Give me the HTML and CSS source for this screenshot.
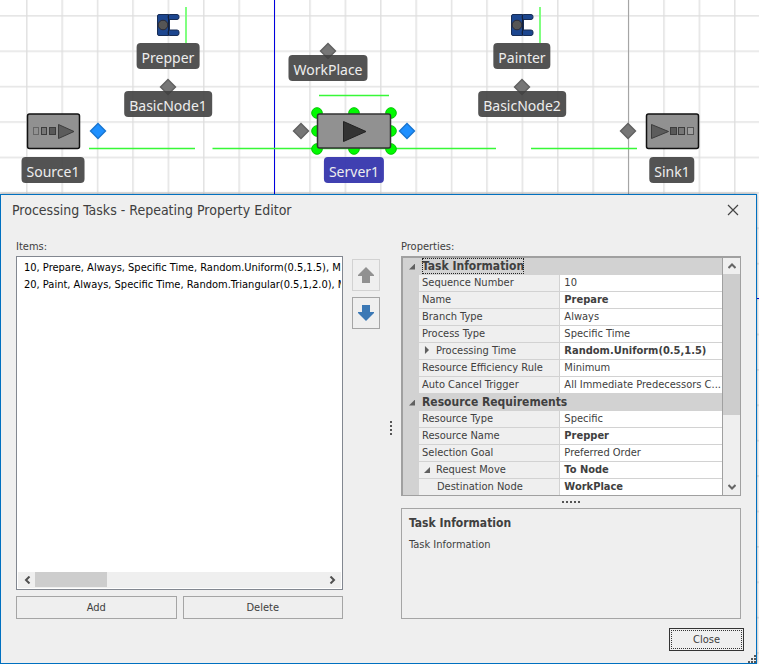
FILE: index.html
```html
<!DOCTYPE html>
<html lang="en">
<head>
<meta charset="utf-8">
<title>Processing Tasks - Repeating Property Editor</title>
<link rel="stylesheet" href="styles.css">
</head>
<body>
<main class="facility">
  <svg class="scene" width="759" height="664" aria-hidden="true">
    <defs>
      <pattern id="grid" x="26" y="15" width="35.4" height="35.4" patternUnits="userSpaceOnUse">
        <path d="M.8 0V35.4M0 .8H35.4" stroke="#dedede" stroke-width="1.3" fill="none"/>
      </pattern>
      <g id="diamond"><path d="M0-7.5 7.5 0 0 7.5-7.5 0z" stroke-width="1.4"/></g>
      <g id="worker">
        <rect x="-10.500" y="-10.500" width="12" height="21" rx="1.500" fill="#1c468f" stroke="#182d55"/>
        <rect x="0" y="-10.500" width="11" height="5" rx="2" fill="#1c468f" stroke="#182d55"/>
        <rect x="0" y="5" width="11" height="5.500" rx="2" fill="#1c468f" stroke="#182d55"/>
        <path d="M.5-10V10" stroke="#12203c"/>
        <circle cx="-5" cy="0" r="4.800" fill="#555" stroke="#2c2c36"/>
      </g>
    </defs>
    <rect width="759" height="664" fill="url(#grid)"/>
    <path d="M628.500 0V664" stroke="#a5a5a5"/>
    <path d="M274.500 0V664M757 298.500H759" stroke="#0000e0"/>
    <path d="M186 7V43M540 7V43" stroke="#80ff80" stroke-width="2"/>
    <path d="M89 148.500H195M212.500 148.500H496M531 148.500H637M319 95.500H389" stroke="#37f837" stroke-width="1.300"/>
    <use href="#worker" x="168" y="25"/>
    <use href="#worker" x="522" y="25"/>
    <g fill="#767676" stroke="#606060">
      <use href="#diamond" x="168" y="87"/><use href="#diamond" x="522" y="87"/>
      <use href="#diamond" x="328" y="51"/><use href="#diamond" x="301" y="131"/>
      <use href="#diamond" x="628" y="131"/>
    </g>
    <g fill="#1e90ff" stroke="#1875d0">
      <use href="#diamond" x="98" y="131"/><use href="#diamond" x="407" y="131"/>
    </g>
    <g fill="#00fa00" stroke="#00c800">
      <circle cx="317" cy="113" r="5.300"/><circle cx="354" cy="113" r="5.300"/><circle cx="391" cy="113" r="5.300"/>
      <circle cx="317" cy="131" r="5.300"/><circle cx="391" cy="131" r="5.300"/>
      <circle cx="317" cy="149" r="5.300"/><circle cx="354" cy="149" r="5.300"/><circle cx="391" cy="149" r="5.300"/>
    </g>
    <rect x="317.500" y="114" width="73" height="34" rx="2" fill="#919191" stroke="#333" stroke-width="1.500"/>
    <path d="M343.500 121.500V141.500L366 131.500z" fill="#333" stroke="#222"/>
    <rect x="27.500" y="114" width="52" height="34.500" rx="2" fill="#919191" stroke="#111" stroke-width="1.500"/>
    <g stroke="#3c3c3c">
      <rect x="33.500" y="127.500" width="5" height="7" fill="#919191" stroke="#666"/>
      <rect x="41.500" y="127.500" width="5" height="7" fill="#777"/>
      <rect x="49.500" y="127.500" width="6" height="7" fill="#595959"/>
      <path d="M58.500 124.500V138.500L74 131.500z" fill="#5c5c5c"/>
    </g>
    <rect x="646.500" y="114" width="52" height="34.500" rx="2" fill="#919191" stroke="#111" stroke-width="1.500"/>
    <g stroke="#3c3c3c">
      <path d="M651.500 124.500V138.500L668.500 131.500z" fill="#5c5c5c"/>
      <rect x="670.500" y="127.500" width="6" height="7" fill="#595959"/>
      <rect x="678.500" y="127.500" width="6" height="7" fill="#777"/>
      <rect x="687.500" y="127.500" width="6" height="7" fill="#a0a0a0" stroke="#555"/>
    </g>
  </svg>
  <span class="tag prepper">Prepper</span>
  <span class="tag node1">BasicNode1</span>
  <span class="tag workplace">WorkPlace</span>
  <span class="tag painter">Painter</span>
  <span class="tag node2">BasicNode2</span>
  <span class="tag source">Source1</span>
  <span class="tag server">Server1</span>
  <span class="tag sink">Sink1</span>

  <section class="dialog" role="dialog" aria-labelledby="title">
    <header class="titlebar">
      <h1 id="title">Processing Tasks - Repeating Property Editor</h1>
      <button class="dismiss" aria-label="Close window"><svg width="12" height="12"><path d="M1 1 11 11M11 1 1 11" stroke="#444" stroke-width="1.200"/></svg></button>
    </header>
    <div class="body">
      <div class="items">
        <h2 id="items-label">Items:</h2>
        <div class="list">
          <ul role="listbox" aria-labelledby="items-label">
            <li role="option">10, Prepare, Always, Specific Time, Random.Uniform(0.5,1.5), Minimum</li>
            <li role="option">20, Paint, Always, Specific Time, Random.Triangular(0.5,1,2.0), Minimum</li>
          </ul>
          <div class="hscroll">
            <button aria-label="Scroll left"><svg width="8" height="8"><path d="M6.500.5 3 4 6.500 7.500" fill="none" stroke="#505050" stroke-width="2"/></svg></button>
            <span class="hthumb"></span>
            <button aria-label="Scroll right"><svg width="8" height="8"><path d="M1.500.5 5 4 1.500 7.500" fill="none" stroke="#505050" stroke-width="2"/></svg></button>
          </div>
        </div>
        <div class="pair"><button class="btn">Add</button><button class="btn">Delete</button></div>
      </div>
      <div class="order">
        <button class="move" disabled aria-label="Move up"><svg width="16" height="16"><path d="M8 0 16 8V9H12V16H4V9H0V8z" fill="#919191"/></svg></button>
        <button class="move" aria-label="Move down"><svg width="16" height="16"><path d="M8 16 16 8V7H12V0H4V7H0V8z" fill="#3b78b5"/></svg></button>
      </div>
      <div class="vgrip"><svg width="2" height="14"><path d="M1 0V14" stroke="#555" stroke-width="2" stroke-dasharray="2 2"/></svg></div>
      <div class="props">
        <h2>Properties:</h2>
        <div class="sheet">
          <table>
            <colgroup><col class="c-gutter"><col class="c-name"><col></colgroup>
            <tbody>
              <tr class="group"><td class="gutter"><i class="open"></i></td><th colspan="2"><span class="focus">Task Information</span></th></tr>
              <tr><td class="gutter"></td><th>Sequence Number</th><td>10</td></tr>
              <tr><td class="gutter"></td><th>Name</th><td class="set">Prepare</td></tr>
              <tr><td class="gutter"></td><th>Branch Type</th><td>Always</td></tr>
              <tr><td class="gutter"></td><th>Process Type</th><td>Specific Time</td></tr>
              <tr><td class="gutter"></td><th><i class="shut"></i>Processing Time</th><td class="set">Random.Uniform(0.5,1.5)</td></tr>
              <tr><td class="gutter"></td><th>Resource Efficiency Rule</th><td>Minimum</td></tr>
              <tr><td class="gutter"></td><th>Auto Cancel Trigger</th><td>All Immediate Predecessors C...</td></tr>
              <tr class="group"><td class="gutter"><i class="open"></i></td><th colspan="2">Resource Requirements</th></tr>
              <tr><td class="gutter"></td><th>Resource Type</th><td>Specific</td></tr>
              <tr><td class="gutter"></td><th>Resource Name</th><td class="set">Prepper</td></tr>
              <tr><td class="gutter"></td><th>Selection Goal</th><td>Preferred Order</td></tr>
              <tr><td class="gutter"></td><th><i class="open"></i>Request Move</th><td class="set">To Node</td></tr>
              <tr><td class="gutter"></td><th class="child">Destination Node</th><td class="set">WorkPlace</td></tr>
            </tbody>
          </table>
          <div class="vscroll">
            <button aria-label="Scroll up"><svg width="8" height="8"><path d="M.5 6 4 2.500 7.500 6" fill="none" stroke="#666" stroke-width="2"/></svg></button>
            <span class="vthumb"></span>
            <button aria-label="Scroll down"><svg width="8" height="8"><path d="M.5 2 4 5.500 7.500 2" fill="none" stroke="#666" stroke-width="2"/></svg></button>
          </div>
        </div>
        <div class="hgrip"><svg width="18" height="2"><path d="M0 1H18" stroke="#555" stroke-width="2" stroke-dasharray="2 2"/></svg></div>
        <div class="help"><strong>Task Information</strong><p>Task Information</p></div>
      </div>
    </div>
    <footer><button class="btn close"><span>Close</span></button></footer>
    <svg class="corner" width="8" height="8" aria-hidden="true"><path d="M0 6h2v2H0zM3 6h2v2H3zM6 6h2v2H6zM3 3h2v2H3zM6 3h2v2H6zM6 0h2v2H6z" fill="#555"/></svg>
  </section>
</main>
</body>
</html>
```
FILE: styles.css
```css
* { box-sizing: border-box; }
body { margin: 0; background: #fff; color: #404040; font: 11px/17px "DejaVu Sans Condensed", "Noto Sans", sans-serif; }
button { margin: 0; padding: 0; border: 0; background: none; color: inherit; font: inherit; }
svg { display: block; }
h1, h2, p, ul { margin: 0; padding: 0; font-weight: normal; }

.facility { position: relative; display: flex; min-height: 100vh; padding: 194px 2px 0 0; overflow: hidden; }
.scene { position: absolute; left: 0; top: 0; }
.tag { position: absolute; transform: translateX(-50%); height: 26px; padding: 0 5px; border-radius: 4px; background: rgba(64, 64, 64, .9); color: #eee; font: 14px/29px "Noto Sans", sans-serif; }
.prepper { left: 168px; top: 43px; }
.node1 { left: 168px; top: 91px; }
.workplace { left: 328px; top: 55px; }
.painter { left: 522px; top: 43px; }
.node2 { left: 522px; top: 91px; }
.source { left: 53px; top: 157px; }
.server { left: 354px; top: 157px; background: rgba(48, 48, 170, .92); }
.sink { left: 672px; top: 157px; }

.dialog { position: relative; flex: 1; display: flex; flex-direction: column; min-width: 0; border: 1px solid #0070c0; background: #efefef; box-shadow: 0 0 3px rgba(0, 0, 0, .4); }
.titlebar { display: flex; justify-content: space-between; align-items: center; height: 30px; padding: 0 17px 0 11px; }
h1 { font-size: 14px; }
.dismiss { display: grid; place-items: center; width: 12px; height: 28px; }
.body { flex: 1; display: grid; grid-template-columns: minmax(0, 327fr) 28px 3px minmax(0, 340fr); column-gap: 9px; padding: 12px 15px 0; }
h2 { height: 19px; font-size: 11px; line-height: 19px; }

.items, .props { display: flex; flex-direction: column; min-width: 0; }
.list { flex: 1; display: flex; flex-direction: column; padding: 1px; border: 1px solid #828790; background: #fff; overflow: hidden; }
ul { flex: 1; padding: 1px 0 0 6px; list-style: none; color: #000; white-space: nowrap; overflow: hidden; }
.hscroll { display: flex; justify-content: space-between; height: 16px; background: #efefef; }
.hscroll button, .vscroll button { display: grid; place-items: center; width: 17px; height: 16px; }
.hthumb { width: 72px; height: 15px; margin-right: auto; background: #cdcdcd; }
.pair { display: grid; grid-template-columns: 1fr 1fr; gap: 6px; margin-top: 6px; }
.btn { height: 23px; border: 1px solid #a5a5a5; line-height: 21px; }

.order { display: flex; flex-direction: column; gap: 6px; padding-top: 22px; }
.move { display: grid; place-items: center; width: 28px; height: 32px; border: 1px solid #a5a5a5; }
.move:disabled { border-color: #d2d2d2; }
.vgrip { display: grid; place-items: center; }

.sheet { display: flex; height: 240px; border: 1px solid #a0a0a0; border-width: 2px 1px 1px 2px; overflow: hidden; }
table { flex: 1; width: 0; table-layout: fixed; border-collapse: separate; border-spacing: 0; }
.c-gutter { width: 16px; }
.c-name { width: 44%; }
tr { height: 17px; }
th, td { height: 17px; padding: 0 0 0 4px; border-bottom: 1px solid #d2d2d2; text-align: left; font-weight: normal; line-height: 16px; white-space: nowrap; overflow: hidden; }
th { padding: 0 3px; background: #efefef; }
td { background: #fff; border-left: 1px solid #d2d2d2; }
.gutter { padding: 0; border: 0; background: #d2d2d2; }
.group th { background: #d2d2d2; font-size: 12px; font-weight: bold; }
.set { font-weight: bold; }
.focus { display: inline-block; outline: 1px dotted #222; outline-offset: -1px; }
.child { padding-left: 18px; }
.open { display: block; width: 6px; height: 6px; margin-left: 6px; background: #606060; clip-path: polygon(100% 0, 100% 100%, 0 100%); }
th .open, .shut { display: inline-block; margin: 0 6px 0 2px; }
.shut { width: 6px; height: 8px; background: #606060; clip-path: polygon(16% 0, 84% 50%, 16% 100%); }
.vscroll { display: flex; flex-direction: column; width: 18px; border-left: 1px solid #a0a0a0; }
.vthumb { flex: 0 0 141px; margin-bottom: auto; background: #cdcdcd; }
.hgrip { display: grid; place-items: center; height: 12px; }
.help { flex: 1; padding: 6px 7px; border: 1px solid #a5a5a5; }
.help strong { font-size: 12px; }
.help p { margin-top: 4px; }

footer { display: flex; justify-content: flex-end; padding: 9px 12px 12px; }
.close { width: 75px; padding: 1px; border-color: #333; }
.close span { display: block; height: 19px; border: 1px dotted #333; line-height: 17px; }
.corner { position: absolute; right: 0; bottom: 0; }
```
